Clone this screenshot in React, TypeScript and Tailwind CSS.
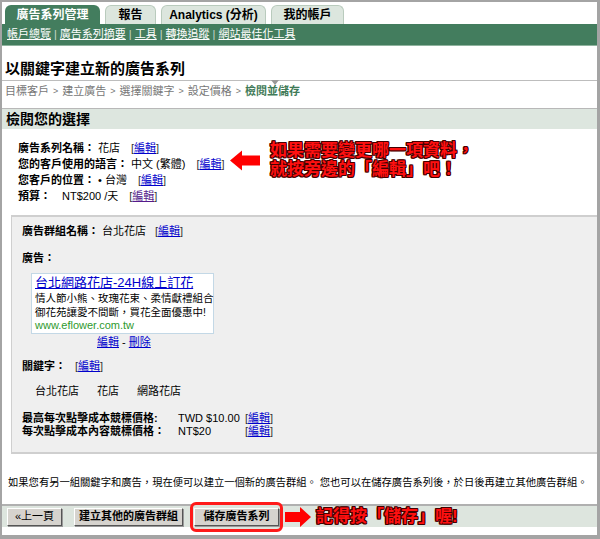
const font = "font-['Liberation_Sans','Noto_Sans_CJK_TC',sans-serif]";

function Edit({ visited }: { visited?: boolean }) {
  return (
    <span className="text-[#333]">
      [
      <a className={visited ? 'text-[#551a8b] underline' : 'text-[#0000cc] underline'}>編輯</a>]
    </span>
  );
}

function LeftArrow({ className }: { className?: string }) {
  return (
    <svg viewBox="0 0 30 20" className={className}>
      <polygon points="0,10 12,0 12,5 30,5 30,15 12,15 12,20" fill="#ff0000" />
    </svg>
  );
}

function RightArrow({ className }: { className?: string }) {
  return (
    <svg viewBox="0 0 26 20" className={className}>
      <polygon points="26,10 15,0 15,5 0,5 0,15 15,15 15,20" fill="#ff0000" />
    </svg>
  );
}

const callout =
  "font-bold whitespace-nowrap text-[#ff1010] [text-shadow:1px_0_0_#400,-1px_0_0_#400,0_1px_0_#400,0_-1px_0_#400,1px_1px_0_#400,-1px_-1px_0_#400,1px_-1px_0_#400,-1px_1px_0_#400]";

const btn =
  'h-[18px] px-1 text-[11px] leading-none whitespace-nowrap bg-[#d6d3ce] border border-t-white border-l-white border-r-[#555] border-b-[#555] shadow-[1px_1px_0_#999] text-black';

export default function App() {
  return (
    <div className={`${font} w-[600px] h-[539px] overflow-hidden bg-white border-t-2 border-l-2 border-r-[3px] border-b-[4px] border-[#a4a4a4] text-[11px] text-black flex flex-col`}>
      {/* tabs */}
      <div className="flex items-end gap-[5px] pl-[3px] pt-[3px] h-[22px]">
        <div className="h-[19px] w-[95px] rounded-t-[6px] bg-[#437d5e] text-white font-bold text-[12px] flex items-center justify-center">
          廣告系列管理
        </div>
        <div className="h-[19px] w-[51px] rounded-t-[6px] bg-[#dce6de] border border-b-0 border-[#b9cbbd] font-bold text-[12px] flex items-center justify-center">
          報告
        </div>
        <div className="h-[19px] w-[105px] rounded-t-[6px] bg-[#dce6de] border border-b-0 border-[#b9cbbd] font-bold text-[12px] flex items-center justify-center">
          Analytics (分析)
        </div>
        <div className="h-[19px] w-[73px] rounded-t-[6px] bg-[#dce6de] border border-b-0 border-[#b9cbbd] font-bold text-[12px] flex items-center justify-center">
          我的帳戶
        </div>
      </div>
      {/* green nav bar */}
      <div className="h-[22px] bg-[#437d5e] border-b border-[#8fb39e] flex items-center pl-[5px] text-white text-[11px] gap-[3px]">
        <a className="underline">帳戶總覽</a>
        <span className="text-[#c8d8cd]">|</span>
        <a className="underline">廣告系列摘要</a>
        <span className="text-[#c8d8cd]">|</span>
        <a className="underline">工具</a>
        <span className="text-[#c8d8cd]">|</span>
        <a className="underline">轉換追蹤</a>
        <span className="text-[#c8d8cd]">|</span>
        <a className="underline">網站最佳化工具</a>
      </div>

      {/* title */}
      <div className="mt-[13px] pl-[3px] text-[15px] font-bold leading-[20px] h-[20px]">以關鍵字建立新的廣告系列</div>
      <div className="relative h-px bg-[#bdbdbd] mt-[1px]">
        <svg viewBox="0 0 8 5" className="absolute left-[269px] top-0 w-[8px] h-[5px]">
          <polygon points="0,0 8,0 4,5" fill="#999" />
        </svg>
      </div>
      <div className="h-[17px] pl-[3px] flex items-center gap-[4px] text-[#777] text-[11px] mt-[2px]">
        <span>目標客戶</span>
        <span className="text-[9px]">&gt;</span>
        <span>建立廣告</span>
        <span className="text-[9px]">&gt;</span>
        <span>選擇關鍵字</span>
        <span className="text-[9px]">&gt;</span>
        <span>設定價格</span>
        <span className="text-[9px]">&gt;</span>
        <span className="font-bold text-[#3f7a57]">檢閱並儲存</span>
      </div>

      {/* section header */}
      <div className="mt-[8px] h-[21px] bg-[#dde6df] border-t border-[#b8b8b8] pl-[4px] flex items-center text-[14px] font-bold">
        檢閱您的選擇
      </div>

      {/* summary rows with callout */}
      <div className="flex mt-[11px]">
        <div className="pl-[16px] flex flex-col text-[11px] leading-[16px] w-[228px] whitespace-nowrap">
          <div className="flex gap-[3px]">
            <span className="font-bold">廣告系列名稱：</span>
            <span>花店</span>
            <span className="ml-[8px]"><Edit /></span>
          </div>
          <div className="flex gap-[3px]">
            <span className="font-bold">您的客戶使用的語言：</span>
            <span>中文 (繁體)</span>
            <span className="ml-[8px]"><Edit /></span>
          </div>
          <div className="flex gap-[3px]">
            <span className="font-bold">您客戶的位置：</span>
            <span>• 台灣</span>
            <span className="ml-[8px]"><Edit /></span>
          </div>
          <div className="flex gap-[3px]">
            <span className="font-bold">預算：</span>
            <span className="ml-[8px]">NT$200 /天</span>
            <span className="ml-[8px]"><Edit visited /></span>
          </div>
        </div>
        <div className="flex items-start pt-[1px]">
          <LeftArrow className="w-[30px] h-[21px] mt-[9px] mr-[10px]" />
          <div className={`${callout} text-[17px] leading-[19px]`}>
            <div>如果需要變更哪一項資料，</div>
            <div>就按旁邊的「編輯」吧！</div>
          </div>
        </div>
      </div>

      {/* ad group box */}
      <div className="ml-[9px] mt-[11px] h-[239px] bg-[#efefef] border-t-2 border-l border-b-2 border-[#cfcfcf] pl-[10px] pt-[7px] text-[11px] leading-[15px] whitespace-nowrap">
        <div className="flex gap-[3px]">
          <span className="font-bold">廣告群組名稱：</span>
          <span>台北花店</span>
          <span className="ml-[6px]"><Edit /></span>
        </div>
        <div className="font-bold mt-[12px]">廣告：</div>
        <div className="ml-[9px] mt-[7px] w-[183px] h-[61px] bg-white border border-[#c3d8e6] px-[3px] pt-[1px] leading-[14px]">
          <a className="text-[#0000cc] underline text-[13px] leading-[16px] block">台北網路花店-24H線上訂花</a>
          <div className="text-[10.5px] leading-[14px]">情人節小熊、玫瑰花束、柔情獻禮組合</div>
          <div className="text-[10.5px] leading-[14px]">御花苑讓愛不間斷，買花全面優惠中!</div>
          <div className="text-[#2e9a2e] text-[11px] leading-[13px]">www.eflower.com.tw</div>
        </div>
        <div className="ml-[75px] mt-[1px] text-[11px]">
          <a className="text-[#0000cc] underline">編輯</a> - <a className="text-[#0000cc] underline">刪除</a>
        </div>
        <div className="flex gap-[3px] mt-[9px]">
          <span className="font-bold">關鍵字：</span>
          <span className="ml-[6px]"><Edit /></span>
        </div>
        <div className="flex gap-[18px] ml-[13px] mt-[10px]">
          <span>台北花店</span>
          <span>花店</span>
          <span>網路花店</span>
        </div>
        <div className="mt-[13px] leading-[13px]">
          <div className="flex">
            <span className="font-bold w-[156px]">最高每次點擊成本競標價格:</span>
            <span className="w-[67px]">TWD $10.00</span>
            <Edit />
          </div>
          <div className="flex">
            <span className="font-bold w-[156px]">每次點擊成本內容競標價格：</span>
            <span className="w-[67px]">NT$20</span>
            <Edit />
          </div>
        </div>
      </div>

      {/* note */}
      <div className="mt-[22px] pl-[6px] text-[10.3px] leading-[14px] whitespace-nowrap">
        如果您有另一組關鍵字和廣告，現在便可以建立一個新的廣告群組。 您也可以在儲存廣告系列後，於日後再建立其他廣告群組。
      </div>

      {/* footer bar */}
      <div className="mt-[14px] h-[23px] bg-[#dde5de] border-t-2 border-[#b0b0b0] flex items-center pl-[5px]">
        <button className={`${btn} w-[55px]`}>«上一頁</button>
        <button className={`${btn} w-[109px] ml-[12px] font-bold`}>建立其他的廣告群組</button>
        <div className="ml-[7px] rounded-[6px] border-[3px] border-[#ff1a1a] px-[1px] py-[3px] -my-[6px] bg-[#dde5de]">
          <button className={`${btn} w-[85px] font-bold`}>儲存廣告系列</button>
        </div>
        <RightArrow className="w-[26px] h-[20px] ml-[2px]" />
        <div className={`${callout} text-[17px] leading-[18px] ml-[5px]`}>記得按「儲存」喔!</div>
      </div>
    </div>
  );
}
